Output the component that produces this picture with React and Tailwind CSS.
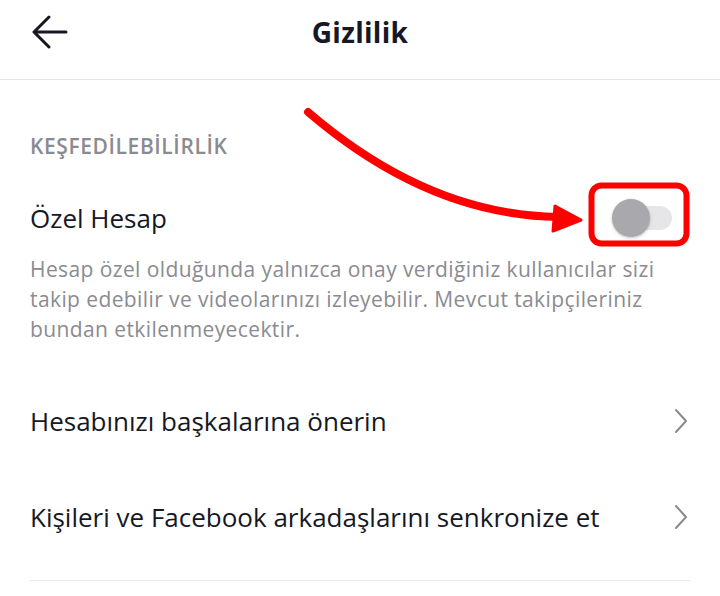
import React from "react";

function Chevron() {
  return (
    <svg width="14" height="26" viewBox="0 0 14 26" fill="none">
      <path d="M2 2 L12 13 L2 24" stroke="#8a8a8e" strokeWidth="2" strokeLinecap="round" strokeLinejoin="round" />
    </svg>
  );
}

export default function App() {
  return (
    <div className="relative w-[720px] h-[596px] bg-white overflow-hidden" style={{ fontFamily: "'Open Sans', 'Liberation Sans', sans-serif" }}>
      <header className="h-[80px] border-b border-[#e3e3e3] relative">
        <div className="h-[64px] flex items-center pl-[32px]">
          <svg width="36" height="34" viewBox="0 0 36 34" fill="none">
            <path d="M34 17 H3 M17 2 L2 17 L17 32" stroke="#161823" strokeWidth="3" strokeLinecap="round" strokeLinejoin="round" />
          </svg>
        </div>
        <div className="absolute left-0 right-0 top-0 h-[64px] flex items-center justify-center">
          <span className="text-[28px] font-bold tracking-[0.3px] text-[#161823]">Gizlilik</span>
        </div>
      </header>

      <main className="px-[30px]">
        <div className="pt-[52px] text-[21px] font-semibold tracking-[0.6px] text-[#8a8b91] leading-[28px]">KEŞFEDİLEBİLİRLİK</div>
        <div className="mt-[38px] flex items-center justify-between h-[40px]">
          <span className="text-[26px] text-[#161823]">Özel Hesap</span>
          <div className="relative w-[60px] h-[38px] mr-[18px] flex items-center">
            <div className="absolute left-[16px] right-0 h-[24px] rounded-full bg-[#e6e6e8]" />
            <div className="absolute left-0 w-[38px] h-[38px] rounded-full bg-[#a8a8ad] shadow-[0_1px_3px_rgba(0,0,0,0.25)]" />
          </div>
        </div>
        <p className="mt-[16px] text-[21px] leading-[30px] tracking-[0.4px] text-[#8a8b91] pr-[20px]">
          Hesap özel olduğunda yalnızca onay verdiğiniz kullanıcılar sizi takip edebilir ve videolarınızı izleyebilir. Mevcut takipçileriniz bundan etkilenmeyecektir.
        </p>
        <div className="mt-[29px] h-[96px] flex items-center justify-between">
          <span className="text-[26px] text-[#161823]">Hesabınızı başkalarına önerin</span>
          <div className="mr-[2px]"><Chevron /></div>
        </div>
        <div className="h-[96px] flex items-center justify-between">
          <span className="text-[26px] text-[#161823]">Kişileri ve Facebook arkadaşlarını senkronize et</span>
          <div className="mr-[2px]"><Chevron /></div>
        </div>
        <div className="mt-[15px] border-t border-[#e8e8e8]" />
      </main>

      <svg className="absolute inset-0 pointer-events-none" width="720" height="596" viewBox="0 0 720 596">
        <path d="M308 112 Q 428 215 558 217" stroke="#ff0000" strokeWidth="8" fill="none" strokeLinecap="round" />
        <polygon points="581,220 555,206 553,231" fill="#ff0000" stroke="#ff0000" strokeWidth="3" strokeLinejoin="round" />
        <rect x="591.5" y="185.5" width="95" height="58" rx="10" fill="none" stroke="#ff0000" strokeWidth="6" />
      </svg>
    </div>
  );
}
